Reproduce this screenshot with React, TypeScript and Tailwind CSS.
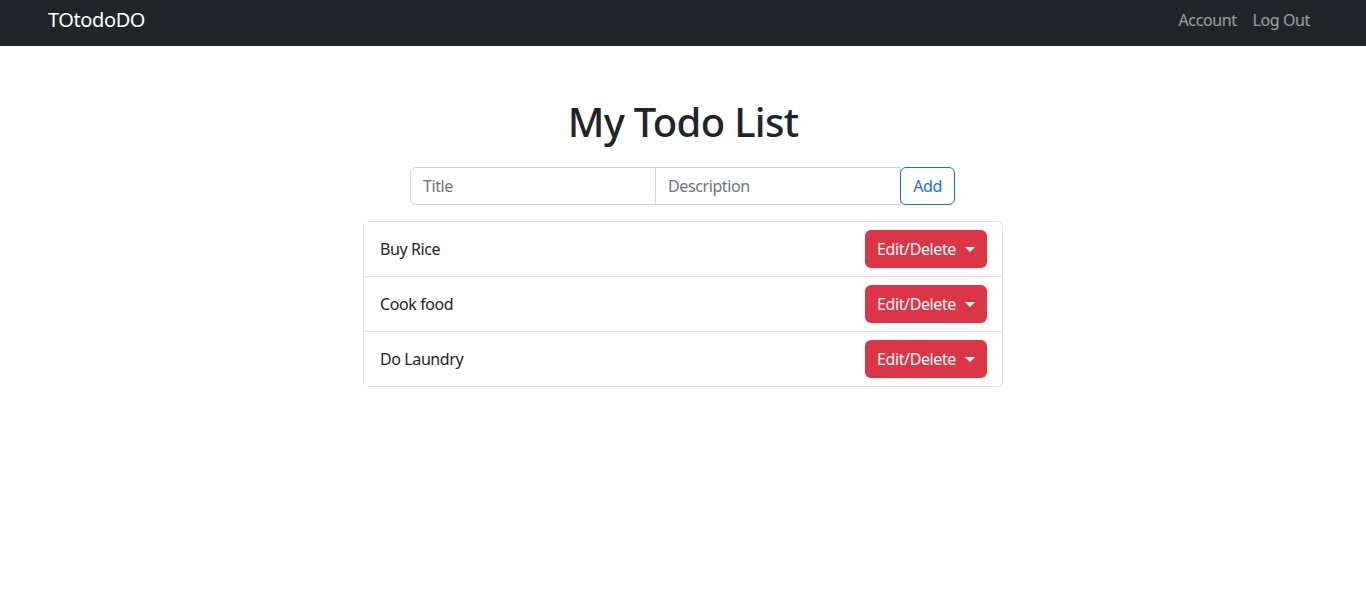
import React from 'react';

const todos = ['Buy Rice', 'Cook food', 'Do Laundry'];

const Caret: React.FC = () => (
  <span className="ml-[9px] inline-block h-0 w-0 border-x-[5px] border-t-[5px] border-x-transparent border-t-white align-[3px]" />
);

const App: React.FC = () => {
  return (
    <div className="min-h-[589px] bg-white text-[#212529] font-['Noto_Sans',sans-serif] tracking-[-0.4px]">
      <nav className="flex h-[46px] items-center justify-between bg-[#212529] pb-[6px] px-[48px]">
        <a className="text-[20px] leading-[30px] text-white">TOtodoDO</a>
        <div className="flex">
          <a className="px-[8px] text-[16px] text-white/55">Account</a>
          <a className="px-[8px] text-[16px] text-white/55">Log Out</a>
        </div>
      </nav>

      <main className="flex flex-col items-center">
        <h1 className="mt-[52px] mb-[21px] text-[40px] font-medium leading-[48px] tracking-[-0.7px]">My Todo List</h1>

        <div className="flex h-[38px] w-[546px]">
          <input
            placeholder="Title"
            className="h-full w-[246px] rounded-l-[6px] border border-[#ced4da] px-[12px] text-[16px] placeholder:text-[#6c757d] outline-none"
          />
          <input
            placeholder="Description"
            className="-ml-px h-full w-[246px] border border-[#ced4da] px-[12px] text-[16px] placeholder:text-[#6c757d] outline-none"
          />
          <button className="-ml-px h-full w-[55px] rounded-[6px] border border-[#0d6efd] text-[16px] text-[#0d6efd]">
            Add
          </button>
        </div>

        <ul className="mt-[16px] w-[640px] rounded-[6px] border border-[#dee2e6]">
          {todos.map((t, i) => (
            <li
              key={t}
              className={`flex h-[54px] items-center justify-between pl-[16px] pr-[15px] text-[16px] ${i > 0 ? 'border-t border-[#dee2e6] h-[55px]' : ''}`}
            >
              <span>{t}</span>
              <button className="flex h-[38px] w-[122px] items-center justify-center rounded-[6px] bg-[#dc3545] text-[16px] text-white">
                Edit/Delete
                <Caret />
              </button>
            </li>
          ))}
        </ul>
      </main>
    </div>
  );
};

export default App;
